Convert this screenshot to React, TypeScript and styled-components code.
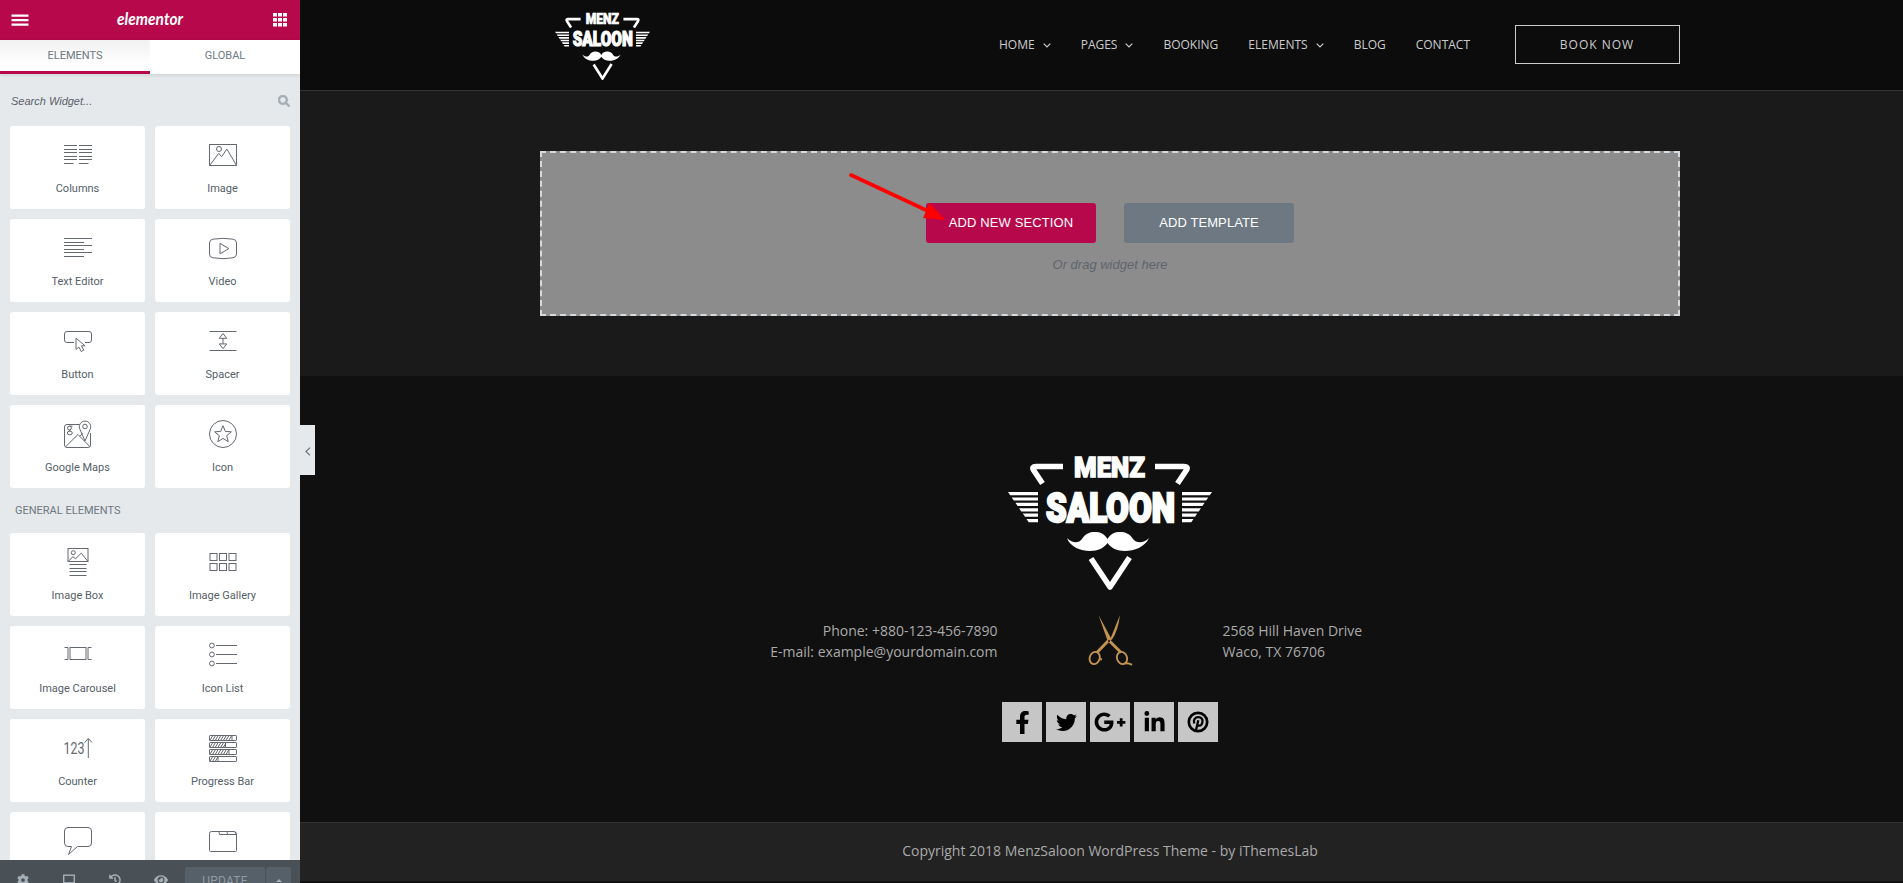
import React from 'react';
import styled, { createGlobalStyle } from 'styled-components';
import { FaCog, FaHistory, FaEye, FaSearch, FaFacebookF, FaTwitter, FaGooglePlusG, FaLinkedinIn } from 'react-icons/fa';

const Global = createGlobalStyle`
  *, *::before, *::after { box-sizing: border-box; }
  html, body { margin: 0; padding: 0; overflow: hidden; background: #101010; }
`;

const Page = styled.div`
  display: flex;
  width: 100vw;
  height: 883px;
  overflow: hidden;
`;

/* ---------- Editor panel ---------- */
const Panel = styled.aside`
  position: relative;
  flex: 0 0 300px;
  display: flex;
  flex-direction: column;
  height: 883px;
  background: #e6e9ec;
  font-family: Roboto, Arial, sans-serif;
  color: #556068;
  z-index: 2;
`;

const PanelHeader = styled.header`
  flex: 0 0 40px;
  display: flex;
  align-items: center;
  justify-content: space-between;
  padding: 0 13px 0 11px;
  background: #b7084b;
`;

const Tabs = styled.nav`
  flex: 0 0 34px;
  display: flex;
  box-shadow: 0 1px 4px rgba(0, 0, 0, 0.12);
`;

const Tab = styled.div<{ $active?: boolean }>`
  flex: 1;
  display: flex;
  justify-content: center;
  padding-top: 9px;
  font-size: 11px;
  line-height: 14px;
  color: #6d7882;
  background: ${(p) => (p.$active ? 'linear-gradient(#f1f1f1, #fff 80%)' : '#fff')};
  border-bottom: 3px solid ${(p) => (p.$active ? '#b7084b' : '#fff')};
`;

const SearchRow = styled.div`
  flex: 0 0 52px;
  display: flex;
  align-items: center;
  justify-content: space-between;
  padding: 1px 10px 0 11px;
  font-family: 'Liberation Sans', Arial, sans-serif;
  font-size: 11px;
  font-style: italic;
  color: #5a6169;
  svg { color: #a4afb7; stroke: #a4afb7; stroke-width: 24px; }
`;

const WidgetArea = styled.div`
  flex: 1;
  min-height: 0;
  overflow: hidden;
`;

const WidgetGrid = styled.div`
  display: grid;
  grid-template-columns: 135px 135px;
  grid-auto-rows: 83px;
  gap: 10px;
  padding: 0 10px;
`;

const Card = styled.div`
  display: flex;
  flex-direction: column;
  align-items: center;
  padding-top: 15px;
  background: #fff;
  border-radius: 3px;
  font-size: 11px;
  line-height: 14px;
`;

const CardLabel = styled.span`
  margin-top: 13px;
`;

const CategoryTitle = styled.div`
  height: 45px;
  padding: 0 15px;
  font-size: 11px;
  line-height: 46px;
  color: #6d7882;
`;

const PanelFooter = styled.footer`
  flex: 0 0 23px;
  display: flex;
  overflow: hidden;
  background: #495157;
  color: #a4afb7;
`;

const Tool = styled.div`
  flex: 0 0 46px;
  height: 40px;
  display: flex;
  align-items: center;
  justify-content: center;
`;

const UpdateGroup = styled.div`
  display: flex;
  gap: 1px;
  height: 27px;
  margin: 7px 0 0 1px;
`;

const UpdateButton = styled.div<{ $width: number }>`
  display: flex;
  align-items: center;
  justify-content: center;
  width: ${(p) => p.$width}px;
  background: #556068;
  border-radius: 2px;
  font-size: 12px;
  letter-spacing: 0.2px;
  color: #919ba3;
`;

const CollapseHandle = styled.div`
  position: absolute;
  left: 300px;
  top: 425px;
  width: 15px;
  height: 50px;
  display: flex;
  align-items: center;
  justify-content: center;
  padding: 2px 0 0 1px;
  background: #e6e9ec;
`;

/* ---------- Site preview ---------- */
const Preview = styled.main`
  flex: 0 0 1620px;
  display: flex;
  flex-direction: column;
  font-family: 'Open Sans', sans-serif;
  background: #101010;
`;

const SiteHeader = styled.header`
  flex: 0 0 91px;
  display: flex;
  align-items: flex-start;
  padding: 0 240px 0 255px;
  background: #0c0c0c;
  border-bottom: 1px solid #333;
`;

const HeaderLogo = styled.a`
  display: block;
  padding-top: 14px;
  line-height: 0;
`;

const Menu = styled.ul`
  display: flex;
  gap: 30px;
  margin: 36px 45px 0 auto;
  padding: 0;
  list-style: none;
`;

const MenuItem = styled.li`
  display: flex;
  align-items: center;
  gap: 8px;
  font-size: 12px;
  line-height: 18px;
  color: #ccc;
`;

const BookButton = styled.a`
  display: flex;
  align-items: center;
  justify-content: center;
  width: 165px;
  height: 39px;
  margin-top: 25px;
  padding-right: 1px;
  border: 1px solid #ccc;
  font-size: 12px;
  letter-spacing: 1px;
  color: #ccc;
`;

const Canvas = styled.section`
  flex: 0 0 285px;
  padding: 60px 240px 0;
  background: #1a1a1a;
`;

const DropZone = styled.div`
  position: relative;
  height: 165px;
  display: flex;
  flex-direction: column;
  align-items: center;
  padding-top: 50px;
  background: #8c8c8c;
  border: 2px dashed #d5dadf;
  font-family: 'Liberation Sans', Arial, sans-serif;
`;

const ButtonRow = styled.div`
  display: flex;
  gap: 28px;
`;

const ActionButton = styled.button<{ $color: string }>`
  width: 170px;
  height: 40px;
  padding: 0;
  border: 0;
  border-radius: 3px;
  background: ${(p) => p.$color};
  color: #fff;
  font: 13px/40px 'Liberation Sans', Arial, sans-serif;
  letter-spacing: 0.1px;
`;

const Hint = styled.div`
  margin-top: 13px;
  font-size: 13px;
  line-height: 18px;
  font-style: italic;
  color: #5f646c;
`;

const ArrowOverlay = styled.svg`
  position: absolute;
  left: 306px;
  top: 16px;
`;

const SiteFooter = styled.footer`
  flex: 0 0 446px;
  display: flex;
  flex-direction: column;
  align-items: center;
  padding-top: 80px;
`;

const ContactRow = styled.div`
  display: grid;
  grid-template-columns: 360px 225px 360px;
  margin-top: 24px;
  height: 54px;
  font-size: 14px;
  line-height: 21px;
  color: #aaa;
`;

const ContactText = styled.div<{ $align: 'left' | 'right' }>`
  padding-top: 6px;
  text-align: ${(p) => p.$align};
`;

const ScissorsCell = styled.div`
  display: flex;
  justify-content: center;
`;

const Socials = styled.div`
  display: flex;
  gap: 4px;
  margin-top: 34px;
`;

const Social = styled.a`
  display: flex;
  align-items: center;
  justify-content: center;
  width: 40px;
  height: 40px;
  background: #c6c6c6;
  color: #000;
`;

const Copyright = styled.div`
  flex: 0 0 59px;
  background: #222;
  border-top: 1px solid #333;
  text-align: center;
  font-size: 14px;
  line-height: 56px;
  color: #aaa;
`;

/* ---------- Drawings ---------- */
const lines = (rows: Array<[number, number, number]>) => (
  <>{rows.map(([x1, x2, y], i) => <path key={i} d={`M${x1} ${y}H${x2}`} />)}</>
);

const rowYs = [4.5, 8.5, 11.5, 15.5, 18.5, 22.5];

const glyphs: Record<string, React.ReactNode> = {
  Columns: (
    <>
      {lines(rowYs.map((y, i) => [0, i === 5 ? 9.5 : 13, y]))}
      {lines(rowYs.map((y, i) => [15, i === 5 ? 24.5 : 28, y]))}
    </>
  ),
  Image: (
    <>
      <rect x=".5" y="3.5" width="27" height="21" />
      <circle cx="10" cy="8" r="2.5" />
      <path d="M.8 24.2 9.8 12.3l2.9 3.4L17.8 8l9.6 16.2" />
    </>
  ),
  'Text Editor': lines(rowYs.map((y, i) => [0, i % 2 ? 20 : 28, y])),
  Video: (
    <>
      <path d="M4 5.2Q14 3.4 24 5.2 27.5 5.6 27.5 9v11q0 3.4-3.5 3.8-10 1.8-20 0Q.5 23.4 .5 20V9Q.5 5.6 4 5.2Z" />
      <path d="M11 9.3v10.6l8.8-5.3z" />
    </>
  ),
  Button: (
    <>
      <path d="M10 15.5H3q-2.5 0-2.500-2.500V7q0-2.500 2.500-2.500h22q2.500 0 2.500 2.500v6q0 2.500-2.500 2.500h-4" />
      <path d="M12 11.2v11.300l2.900-2.500 2.300 4.500 2.500-1.300-2.300-4.400h3.700z" />
    </>
  ),
  Spacer: (
    <>
      {lines([[0.5, 27.5, 4.5], [0.5, 27.5, 23.5]])}
      <path d="M14 6.500l-3.700 4.800h7.400zM14 21.700l-3.700-4.800h7.400zM14 11.300v5.600" />
    </>
  ),
  'Google Maps': (
    <>
      <path d="M15.500 4.500H3q-2.500 0-2.500 2.500v18q0 2.500 2.500 2.500h21q2.500 0 2.500-2.500V13M1.500 26.800 14 14.500l12 12.300M16 16.300l2.500-3" />
      <path d="M21 21 16 9.500A5.700 5.700 0 1 1 26 9.500Z" />
      <circle cx="21" cy="6.500" r="2.300" />
      <circle cx="5.500" cy="8" r="1.900" />
      <ellipse cx="5.800" cy="13" rx="2.500" ry="1.800" />
      <path d="M5.500 6.100h3M7 9.500l-2.500 1.700" />
    </>
  ),
  Icon: (
    <>
      <circle cx="14" cy="14" r="13.5" />
      <path d="m14 5.700 2.300 5.700 6.100.4-4.700 3.900 1.500 6-5.200-3.300-5.200 3.300 1.500-6-4.700-3.900 6.100-.4z" />
    </>
  ),
  'Image Box': (
    <>
      <rect x="4" y=".5" width="20" height="13" />
      <circle cx="9.3" cy="4.7" r="2" />
      <path d="M4.500 13.300 8.700 8.700l3 2 5.600-5.600 6.500 8.200" />
      {lines([16.5, 20.5, 23.5, 27.5].map((y) => [5.5, 22.5, y]))}
    </>
  ),
  'Image Gallery': (
    <>
      {[5.5, 15.5].map((y) => [1, 10.5, 20].map((x) => <rect key={`${x}-${y}`} x={x} y={y} width="7" height="7" />))}
    </>
  ),
  'Image Carousel': (
    <>
      <rect x="6" y="6.5" width="16" height="12" />
      <path d="M.5 6.500H4v12H.5M27.500 6.500H24v12h3.500" />
    </>
  ),
  'Icon List': (
    <>
      {[4.5, 13.5, 22.5].map((y) => <circle key={y} cx="2.9" cy={y} r="2.4" />)}
      {lines([[7, 28, 4.5], [7, 28, 13.5], [7, 28, 22.5]])}
    </>
  ),
  Counter: (
    <>
      <text x="-.5" y="20.3" fontFamily="Roboto" fontSize="16" textLength="21" lengthAdjust="spacingAndGlyphs" fill="#64686f" stroke="none">123</text>
      <path d="M24.300 24V4.500M20.500 8.500l3.800-4 3.800 4" />
    </>
  ),
  'Progress Bar': (
    <>
      {([[1.5, 23], [8.5, 16.5], [15.5, 20], [22.5, 9]] as Array<[number, number]>).map(([y, w]) => (
        <React.Fragment key={y}>
          <rect x=".5" y={y} width="27" height="5" rx=".6" />
          <path d={`M${w} ${y}v5`} />
          {Array.from({ length: Math.floor((w - 3) / 2.7) + 1 }, (_, i) => (
            <path key={i} d={`M${0.8 + i * 2.7} ${y + 5}l3-5`} />
          ))}
        </React.Fragment>
      ))}
    </>
  ),
  Testimonial: <path d="M7.500 19.500H4Q.5 19.500 .5 16V4Q.5 .5 4 .5h20q3.500 0 3.500 3.500v12q0 3.500-3.500 3.500H13.500l-9 8z" />,
  Tabs: (
    <>
      <path d="M.5 6.500q0-2 2-2h22.500q2.500 0 2.500 3v16q0 1-1 1h-25q-1 0-1-1z" />
      <path d="M9.500 4.700q1 .8 1 2.800h17M17.500 4.700q1 .8 1 2.800M26 5q1 .8 1.300 2.500" />
    </>
  ),
};

const WidgetIcon = ({ name }: { name: string }) => (
  <svg width="28" height="28" viewBox="0 0 28 28" fill="none" stroke="#64686f" strokeWidth="1" overflow="visible">
    {glyphs[name]}
  </svg>
);

const Widget = ({ name, labelled = true }: { name: string; labelled?: boolean }) => (
  <Card aria-label={name}>
    <WidgetIcon name={name} />
    {labelled && <CardLabel>{name}</CardLabel>}
  </Card>
);

const MenzLogo = ({ width, height }: { width: number; height: number }) => (
  <svg width={width} height={height} viewBox="0 0 204 134" preserveAspectRatio="none" fill="#fff" fontFamily="Roboto" fontWeight="900" overflow="visible">
    <text x="66" y="20.6" fontSize="28.5" textLength="71" lengthAdjust="spacingAndGlyphs" stroke="#fff" strokeWidth="1.4">MENZ</text>
    <text x="38" y="66" fontSize="40.5" textLength="129" lengthAdjust="spacingAndGlyphs" stroke="#fff" strokeWidth="2.4">SALOON</text>
    <g fill="none" stroke="#fff" strokeWidth="5.6" strokeLinejoin="round">
      <path d="M55 10.500H28Q23.500 10.500 25.500 14L34.500 27.500" />
      <path d="M147 10.500h29q4.500 0 2.500 3.500l-9 13.500" />
      <path d="M83 102.500 102 131l19.500-29.500" />
    </g>
    {[0, 1, 2, 3, 4, 5].map((i) => (
      <React.Fragment key={i}>
        <path d={`M${i * 3.7} ${36 + i * 5.4}H30v3.200H${2.2 + i * 3.7}z`} />
        <path d={`M${204 - i * 3.7} ${36 + i * 5.4}H174v3.200H${201.8 - i * 3.7}z`} />
      </React.Fragment>
    ))}
    <path d="M99.500 83C96 77 91 75.500 85 76c-6 .5-9 4-11 7-3 4-9 5-15-1 3 9 14 13 23 13 8 0 14-3 17.500-8 3.500 5 9.500 8 17.500 8 9 0 20-4 24-13-6 6-13 5-16 1-2-3-5-6.500-11-7-6-.5-11 1-14.500 7Z" />
  </svg>
);

const Chevron = () => (
  <svg width="8" height="5" viewBox="0 0 8 5" fill="none" stroke="#ccc" strokeWidth="1.2">
    <path d="m.7 .7 3.300 3.300L7.300 .7" />
  </svg>
);

const Scissors = () => (
  <svg width="45" height="52" viewBox="0 0 45 52" fill="none" stroke="#c2934f">
    <path d="M10.500 1 20 28l3.300-3.300Z" fill="#c2934f" stroke="none" />
    <path d="M32 1 21.500 27l2.500-1.500Q30 17 32 1Z" fill="#c2934f" stroke="none" />
    <path d="M20.500 26.500 9 38.500M21 26.500l12 12" strokeWidth="3" />
    <ellipse cx="6.7" cy="44" rx="5" ry="6.2" strokeWidth="1.9" transform="rotate(18 6.7 44)" />
    <ellipse cx="34" cy="44" rx="5" ry="6.2" strokeWidth="1.9" transform="rotate(-18 34 44)" />
    <path d="M12 45l2 .5M37 49.500q3-1 7 1.300" strokeWidth="2" />
    <circle cx="21" cy="27" r="1" fill="#101010" stroke="none" />
  </svg>
);

const Pinterest = () => (
  <svg width="22" height="22" viewBox="0 0 22 22" fill="none" stroke="#000">
    <circle cx="11" cy="11" r="9.2" strokeWidth="2.7" />
    <path d="M7.400 12.400C5.800 9.200 8 6.200 11.300 6.200c3 0 4.600 2 4.200 4.600-.4 2.500-1.900 4-3.600 3.800-1-.1-1.500-.8-1.500-.8M11.300 9.300 8.800 20" strokeWidth="2.3" />
  </svg>
);

const quickWidgets = ['Columns', 'Image', 'Text Editor', 'Video', 'Button', 'Spacer', 'Google Maps', 'Icon'];
const generalWidgets = ['Image Box', 'Image Gallery', 'Image Carousel', 'Icon List', 'Counter', 'Progress Bar'];
const clippedWidgets = ['Testimonial', 'Tabs'];
const menu = [
  { label: 'HOME', sub: true },
  { label: 'PAGES', sub: true },
  { label: 'BOOKING' },
  { label: 'ELEMENTS', sub: true },
  { label: 'BLOG' },
  { label: 'CONTACT' },
];

export default function App() {
  return (
    <>
      <Global />
      <Page>
        <Panel>
          <PanelHeader>
            <svg width="18" height="14" viewBox="0 0 18 14" stroke="#fff" strokeWidth="2.3">
              <path d="M.5 2.700h17M.5 7.200h17M.5 11.700h17" />
            </svg>
            <svg width="68" height="24" viewBox="0 0 68 24" fill="#fff" overflow="visible">
              <text x="0" y="17" fontFamily="Lato" fontStyle="italic" fontWeight="700" fontSize="17" textLength="66" lengthAdjust="spacingAndGlyphs">elementor</text>
            </svg>
            <svg width="14" height="14" viewBox="0 0 14 14" fill="#fff">
              {[0, 5, 10].map((y) => [0, 5, 10].map((x) => <rect key={`${x}-${y}`} x={x} y={y} width="4" height="3.5" />))}
            </svg>
          </PanelHeader>
          <Tabs>
            <Tab $active>ELEMENTS</Tab>
            <Tab>GLOBAL</Tab>
          </Tabs>
          <SearchRow>
            <span>Search Widget...</span>
            <FaSearch size={12} />
          </SearchRow>
          <WidgetArea>
            <WidgetGrid>{quickWidgets.map((n) => <Widget key={n} name={n} />)}</WidgetGrid>
            <CategoryTitle>GENERAL ELEMENTS</CategoryTitle>
            <WidgetGrid>
              {generalWidgets.map((n) => <Widget key={n} name={n} />)}
              {clippedWidgets.map((n) => <Widget key={n} name={n} labelled={false} />)}
            </WidgetGrid>
          </WidgetArea>
          <PanelFooter>
            <Tool><FaCog size={12} /></Tool>
            <Tool>
              <svg width="12" height="12" viewBox="0 0 12 12" fill="none" stroke="#a4afb7">
                <rect x=".7" y="1.2" width="10.6" height="7.6" strokeWidth="1.4" />
                <path d="M0 10.500h12" strokeWidth="2" />
              </svg>
            </Tool>
            <Tool><FaHistory size={12} /></Tool>
            <Tool><FaEye size={14} /></Tool>
            <UpdateGroup>
              <UpdateButton $width={80}>UPDATE</UpdateButton>
              <UpdateButton $width={25}>
                <svg width="6" height="3" viewBox="0 0 6 3" fill="#a4afb7"><path d="M0 3l3-3 3 3z" /></svg>
              </UpdateButton>
            </UpdateGroup>
          </PanelFooter>
          <CollapseHandle>
            <svg width="6" height="9" viewBox="0 0 6 9" fill="none" stroke="#6d7882" strokeWidth="1.3">
              <path d="M5 .6 1 4.500 5 8.400" />
            </svg>
          </CollapseHandle>
        </Panel>
        <Preview>
          <SiteHeader>
            <HeaderLogo><MenzLogo width={95} height={66} /></HeaderLogo>
            <Menu>
              {menu.map((m) => (
                <MenuItem key={m.label}>
                  {m.label}
                  {m.sub && <Chevron />}
                </MenuItem>
              ))}
            </Menu>
            <BookButton>BOOK NOW</BookButton>
          </SiteHeader>
          <Canvas>
            <DropZone>
              <ButtonRow>
                <ActionButton $color="#b7084b">ADD NEW SECTION</ActionButton>
                <ActionButton $color="#6d7882">ADD TEMPLATE</ActionButton>
              </ButtonRow>
              <Hint>Or drag widget here</Hint>
              <ArrowOverlay width="102" height="58" viewBox="0 0 102 58">
                <path d="M3 6 80 42" stroke="#f00" strokeWidth="3.6" strokeLinecap="round" />
                <path d="M97 51 81.500 34 75 49Z" fill="#f00" />
              </ArrowOverlay>
            </DropZone>
          </Canvas>
          <SiteFooter>
            <MenzLogo width={204} height={134} />
            <ContactRow>
              <ContactText $align="right">
                Phone: +880-123-456-7890<br />E-mail: example@yourdomain.com
              </ContactText>
              <ScissorsCell><Scissors /></ScissorsCell>
              <ContactText $align="left">
                2568 Hill Haven Drive<br />Waco, TX 76706
              </ContactText>
            </ContactRow>
            <Socials>
              <Social><FaFacebookF size={23} /></Social>
              <Social><FaTwitter size={21} /></Social>
              <Social><FaGooglePlusG size={32} /></Social>
              <Social><FaLinkedinIn size={23} /></Social>
              <Social><Pinterest /></Social>
            </Socials>
          </SiteFooter>
          <Copyright>Copyright 2018 MenzSaloon WordPress Theme - by iThemesLab</Copyright>
        </Preview>
      </Page>
    </>
  );
}
